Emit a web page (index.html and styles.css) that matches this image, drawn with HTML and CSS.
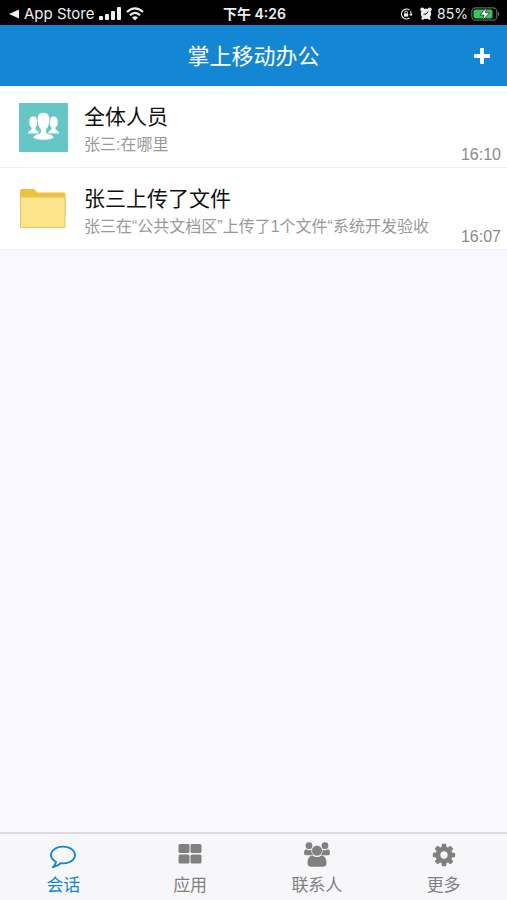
FILE: index.html
```html
<!DOCTYPE html>
<html lang="zh-CN">
<head>
<meta charset="utf-8">
<meta name="viewport" content="width=device-width, initial-scale=1">
<title>掌上移动办公</title>
<link rel="stylesheet" href="styles.css">
</head>
<body>
<div class="status">
  <div class="status-left">
    <svg width="10" height="10" viewBox="0 0 10 10"><path d="M0 5 10 .5v9z" fill="currentColor"/></svg>
    <span class="back-app">App Store</span>
    <svg width="22" height="14" viewBox="0 0 22 14" fill="currentColor"><rect y="9" width="4" height="4" rx="1"/><rect x="6" y="7" width="4" height="6" rx="1"/><rect x="12" y="4" width="4" height="9" rx="1"/><rect x="18" y="0" width="4" height="13" rx="1"/></svg>
    <svg width="18" height="14" viewBox="0 0 18 14" fill="none" stroke="currentColor" stroke-width="2.2"><path d="M1 5Q9-2.200 17 5"/><path d="M3.900 8.200Q9 3.700 14.100 8.200"/><path d="M6 10.400Q9 8 12 10.400L9 13.400z" fill="currentColor" stroke="none"/></svg>
  </div>
  <div class="clock">下午 4:26</div>
  <div class="status-right">
    <svg width="13" height="12" viewBox="0 0 13 12" fill="none" stroke="currentColor"><path d="M9.500 2A5 5 0 1 0 9.500 10M10.400 3.200A5 5 0 0 1 11 7" stroke-width="1.200"/><path d="M9.300 6h3.400L11 8.300z" fill="currentColor" stroke="none"/><rect x="4" y="5.400" width="4.200" height="3.200" fill="currentColor" stroke="none"/><path d="M4.800 5.500V4.300a1.300 1.300 0 0 1 2.600 0v1.200"/></svg>
    <svg class="alarm" width="12" height="13" viewBox="0 0 12 13"><g fill="currentColor"><circle cx="6" cy="6.800" r="5.200"/><circle cx="2.300" cy="2.500" r="2"/><circle cx="9.700" cy="2.500" r="2"/><path d="m1 12 2-3 2 2-2 2zM11 12 9 9l-2 2 2 2z"/></g><path d="M6 7.200 8 4.700M6 7.200H3.500" stroke="#000" stroke-width=".9" fill="none"/></svg>
    <span class="percent">85%</span>
    <svg width="29" height="14" viewBox="0 0 29 14"><rect x=".8" y=".8" width="25" height="12.400" rx="3.800" fill="none" stroke="#666" stroke-width="1.200"/><rect x="2.500" y="2.500" width="19" height="9" rx="2" fill="#35c759"/><path d="M27 4.500a3 3 0 0 1 0 5z" fill="#666"/><path d="m15.500 .5-6.500 7.500h4l-1.500 5.500 7-7.700h-4z" fill="#fff" stroke="#000" stroke-width=".6"/></svg>
  </div>
</div>
<header class="header">
  <h1>掌上移动办公</h1>
  <button class="add" type="button" aria-label="添加"><svg width="16" height="16" viewBox="0 0 16 16" fill="currentColor"><path d="M7 0h2q1 0 1 1v5h5q1 0 1 1v2q0 1-1 1h-5v5q0 1-1 1H7q-1 0-1-1v-5H1q-1 0-1-1V7q0-1 1-1h5V1q0-1 1-1z"/></svg></button>
</header>
<main class="list">
  <a class="row" href="#all">
    <svg class="avatar" width="49" height="49" viewBox="0 0 49 49"><rect width="49" height="49" fill="#66c5c5"/><g fill="#fff"><path d="M14 13.500c3.500 0 4.800 2.600 4.400 6.500-.3 2-.9 3.500-1.900 4.600v2l3 2v2H9c0-2.600 1.700-3.100 3.600-3.900v-2c-1.500-1.200-2.300-3-2.300-5.300 0-3.700 1-5.900 3.700-5.900z"/><path d="M35 13.500c-3.500 0-4.800 2.600-4.400 6.500.3 2 .9 3.500 1.900 4.600v2l-3 2v2H40c0-2.600-1.700-3.100-3.600-3.900v-2c1.500-1.200 2.300-3 2.300-5.300 0-3.700-1-5.900-3.700-5.900z"/><path d="M24.500 9.500c4.600 0 6.600 3.100 6.300 7.900-.2 4-1.300 6.700-3.300 8.900v3.500c1.700 1.500 7.500 1.500 7.500 5.200-5.500 3-15.500 3-21 0 0-3.700 5.800-3.700 7.500-5.200v-3.500c-2-2.200-3.100-4.900-3.300-8.900-.3-4.800 1.700-7.900 6.300-7.900z" stroke="#66c5c5" stroke-width=".8"/></g></svg>
    <div class="text"><h2>全体人员</h2><p>张三:在哪里</p></div>
    <time>16:10</time>
  </a>
  <a class="row" href="#files">
    <svg class="avatar" width="49" height="49" viewBox="0 0 49 49"><path d="M1 30V5.500Q1 4 2.500 4H15q1 0 1.500 1.500L18 7.500h27q1.500 0 1.500 1.500v21z" fill="#edc23c"/><path d="M1.500 13q0-1 1-1h42.500q1 0 1 1v28.500q0 1-1 1H2.500q-1 0-1-1z" fill="#fce58b" stroke="#e3c45f"/></svg>
    <div class="text"><h2>张三上传了文件</h2><p>张三在“公共文档区”上传了1个文件“系统开发验收</p></div>
    <time>16:07</time>
  </a>
</main>
<nav class="tabs">
  <a class="tab active" href="#chat"><svg width="26" height="26" viewBox="0 0 1792 1792" fill="currentColor"><path d="M896 384q-204 0-381.500 69.500t-282 187.500-104.500 255q0 112 71.500 213.500t201.500 175.500l87 50-27 96q-24 91-70 172 152-63 275-171l43-38 57 6q69 8 130 8 204 0 381.500-69.500t282-187.500 104.500-255-104.500-255-282-187.500-381.500-69.500zm896 512q0 174-120 321.500t-326 233-450 85.500q-70 0-145-8-198 175-460 242-49 14-114 22h-5q-15 0-27-10.500t-16-27.500v-1q-3-4-.5-12t2-10 4.500-9.500l6-9 7-8.500 8-9q7-8 31-34.500t34.500-38 31-39.500 32.500-51 27-59 26-76q-157-89-247.500-220t-90.500-281q0-130 71-248.500t191-204.500 286-136.500 348-50.500 348 50.500 286 136.500 191 204.500 71 248.500z"/></svg><span>会话</span></a>
  <a class="tab" href="#apps"><svg width="26" height="26" viewBox="0 0 26 26" fill="currentColor"><rect x="1.500" y="2" width="11" height="9" rx="1.500"/><rect x="13.500" y="2" width="11" height="9" rx="1.500"/><rect x="1.500" y="12.500" width="11" height="9" rx="1.500"/><rect x="13.500" y="12.500" width="11" height="9" rx="1.500"/></svg><span>应用</span></a>
  <a class="tab" href="#contacts"><svg width="26" height="26" viewBox="0 0 26 26" fill="currentColor"><circle cx="5" cy="3.700" r="3.400"/><circle cx="21" cy="3.700" r="3.400"/><path d="M2 7.200Q5 9 8.200 7.500q-.6 3.500 1.200 5.700H2.500Q0 13.500 0 11.500 0 7.500 2 7.200z"/><path d="M24 7.200q-3 1.800-6.200.3.600 3.500-1.200 5.700h6.900q2.500.3 2.500-1.700 0-4-2-4.300z"/><circle cx="13" cy="8.700" r="5.400" stroke="#f7f7fa" stroke-width=".7"/><path d="M8.500 13.500q4.500 3 9 0 5 .5 5 7.500 0 3.800-3.700 3.800H7.200q-3.700 0-3.700-3.800 0-7 5-7.500z"/></svg><span>联系人</span></a>
  <a class="tab" href="#more"><svg width="26" height="26" viewBox="0 0 1792 1792" fill="currentColor"><path d="M1152 896q0-106-75-181t-181-75-181 75-75 181 75 181 181 75 181-75 75-181zm512-109v222q0 12-8 23t-20 13l-185 28q-19 54-39 91 35 50 107 138 10 12 10 25t-9 23q-27 37-99 108t-94 71q-12 0-26-9l-138-108q-44 23-91 38-16 136-29 186-7 28-36 28h-222q-14 0-24.500-8.500t-11.500-21.500l-28-184q-49-16-90-37l-141 107q-10 9-25 9-14 0-25-11-126-114-165-168-7-10-7-23 0-12 8-23 15-21 51-66.500t54-70.500q-27-50-41-99l-183-27q-13-2-21-12.500t-8-23.500v-222q0-12 8-23t19-13l186-28q14-46 39-92-40-57-107-138-10-12-10-24 0-10 9-23 26-36 98.500-107.500t94.500-71.500q13 0 26 10l138 107q44-23 91-38 16-136 29-186 7-28 36-28h222q14 0 24.500 8.500t11.500 21.500l28 184q49 16 90 37l142-107q9-9 24-9 13 0 25 10 129 119 165 170 7 8 7 22 0 12-8 23-15 21-51 66.500t-54 70.500q26 50 41 98l183 28q13 2 21 12.500t8 23.500z"/></svg><span>更多</span></a>
</nav>
</body>
</html>
```
FILE: styles.css
```css
* { box-sizing: border-box; }
body {
  margin: 0;
  min-height: 100vh;
  display: flex;
  flex-direction: column;
  background: #f9f8fe;
  font-family: "Liberation Sans", "Noto Sans CJK SC", sans-serif;
}
svg { display: block; flex: none; }
a { color: inherit; text-decoration: none; }
h1, h2, p { margin: 0; font-weight: 400; }

.status {
  display: grid;
  grid-template-columns: 1fr auto 1fr;
  align-items: center;
  height: 25px;
  padding: 2px 7px 0 9px;
  background: #000;
  color: #eee;
  font: 14px/20px Inter, "Noto Sans CJK SC", sans-serif;
}
.status-left, .status-right { display: flex; align-items: center; gap: 5px; }
.status-right { justify-content: flex-end; gap: 3px; }
.back-app { font-size: 15px; }
.alarm { margin: 0 2px 0 4px; }
.percent { font-size: 14px; }
.clock { font-weight: 600; }

.header {
  display: grid;
  grid-template-columns: 1fr auto 1fr;
  align-items: center;
  height: 61px;
  padding: 0 17px;
  background: #1487d4;
  color: #fff;
}
.header h1 { grid-column: 2; padding-top: 2px; font-size: 22px; line-height: 32px; }
.add { justify-self: end; padding: 0; border: 0; background: none; color: #fff; }

.list { flex: 1; }
.row {
  display: flex;
  height: 82px;
  padding: 0 6px 0 19px;
  gap: 16px;
  background: #fff;
  border-bottom: 1px solid #efeff2;
}
.avatar { margin-top: 17px; }
.text { flex: 1; min-width: 0; padding-top: 16px; }
.text h2 { font-size: 21px; line-height: 30px; color: #111; }
.text p {
  font-size: 16px;
  line-height: 26px;
  color: #999;
  white-space: nowrap;
  overflow: hidden;
}
.row time { align-self: flex-end; padding-bottom: 2px; font-size: 16px; line-height: 20px; color: #8a8a8a; }

.tabs {
  display: flex;
  height: 68px;
  border-top: 2px solid #dcdce0;
  background: #f7f7fa;
  color: #808080;
}
.tab { flex: 1; display: flex; flex-direction: column; align-items: center; gap: 6px; padding-top: 8px; }
.tab span { font-size: 17px; line-height: 24px; }
.active { color: #1487d4; }
```
